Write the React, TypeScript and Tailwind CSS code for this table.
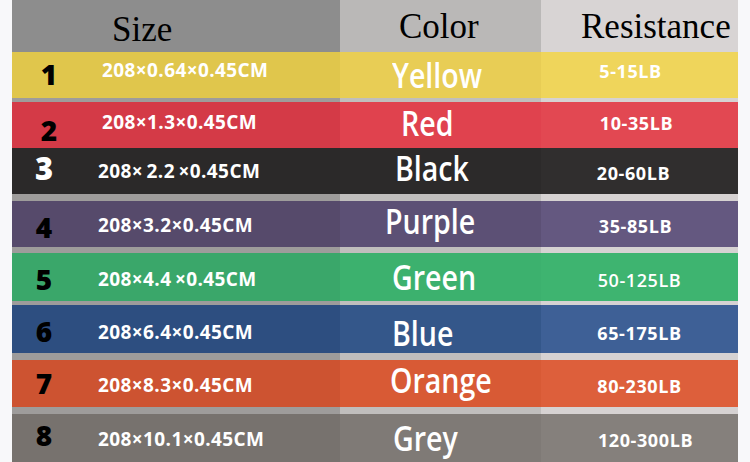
import React from "react";

type Band = {
  n: string;
  dim: string;
  color: string;
  res: string;
  h: string;
  bg: [string, string, string];
  numCls: string;
  numPad: string;
  dimCls: string;
  colorCls: string;
  resCls: string;
  gap?: string;
};

const bands: Band[] = [
  {
    n: "1",
    dim: "208×0.64×0.45CM",
    color: "Yellow",
    res: "5-15LB",
    h: "h-[46px]",
    bg: ["bg-[#e0c64c]", "bg-[#e8cd55]", "bg-[#efd55b]"],
    numCls: "text-black pb-[3px]",
    numPad: "pl-[26px]",
    dimCls: "pl-[4px] pb-[9px]",
    colorCls: "pl-[52px]",
    resCls: "pb-[8px] pr-[18px]",
    gap: "h-[4px]",
  },
  {
    n: "2",
    dim: "208×1.3×0.45CM",
    color: "Red",
    res: "10-35LB",
    h: "h-[46px]",
    bg: ["bg-[#d43a47]", "bg-[#e0424e]", "bg-[#e24852]"],
    numCls: "text-black pt-[10px]",
    numPad: "pl-[26px]",
    dimCls: "pl-[4px] pb-[5px]",
    colorCls: "pl-[61px] pb-[5px]",
    resCls: "pb-[4px] pr-[6px]",
  },
  {
    n: "3",
    dim: "208×\u20092.2\u2009×0.45CM",
    color: "Black",
    res: "20-60LB",
    h: "h-[46px]",
    bg: ["bg-[#2b2929]", "bg-[#2c2a2a]", "bg-[#302e2e]"],
    numCls: "text-white text-[31px] pb-[6px]",
    numPad: "pl-[21px]",
    dimCls: "pt-[1px]",
    colorCls: "pl-[55px] pb-[7px]",
    resCls: "pt-[3px] pr-[12px]",
    gap: "h-[7px]",
  },
  {
    n: "4",
    dim: "208×3.2×0.45CM",
    color: "Purple",
    res: "35-85LB",
    h: "h-[46px]",
    bg: ["bg-[#564a6b]", "bg-[#5c5075]", "bg-[#645880]"],
    numCls: "text-black pt-[5px]",
    numPad: "pl-[21px]",
    dimCls: "pt-[2px]",
    colorCls: "pl-[45px] pb-[6px]",
    resCls: "pt-[4px] pr-[8px]",
    gap: "h-[6px]",
  },
  {
    n: "5",
    dim: "208×4.4\u2009×0.45CM",
    color: "Green",
    res: "50-125LB",
    h: "h-[48px]",
    bg: ["bg-[#3aa76a]", "bg-[#3cb16e]", "bg-[#3eb470]"],
    numCls: "text-black pt-[3px]",
    numPad: "pl-[21px]",
    dimCls: "pt-[4px] text-[#eaf5dc]",
    colorCls: "pl-[52px]",
    resCls: "pt-[6px] font-semibold text-[#eaf5dc] tracking-[-0.2px]",
    gap: "h-[4px]",
  },
  {
    n: "6",
    dim: "208×6.4×0.45CM",
    color: "Blue",
    res: "65-175LB",
    h: "h-[48px]",
    bg: ["bg-[#2d4e80]", "bg-[#34578a]", "bg-[#3e6096]"],
    numCls: "text-black pt-[4px]",
    numPad: "pl-[21px]",
    dimCls: "pt-[6px]",
    colorCls: "pl-[52px] pt-[7px]",
    resCls: "pt-[7px]",
    gap: "h-[7px]",
  },
  {
    n: "7",
    dim: "208×8.3×0.45CM",
    color: "Orange",
    res: "80-230LB",
    h: "h-[47px]",
    bg: ["bg-[#cd5331]", "bg-[#d85a35]", "bg-[#dd5f3b]"],
    numCls: "text-black pb-[1px]",
    numPad: "pl-[21px]",
    dimCls: "pt-[4px]",
    colorCls: "pl-[50px] pb-[7px]",
    resCls: "pt-[5px]",
    gap: "h-[7px]",
  },
  {
    n: "8",
    dim: "208×10.1×0.45CM",
    color: "Grey",
    res: "120-300LB",
    h: "h-[48px]",
    bg: ["bg-[#77726e]", "bg-[#7f7a76]", "bg-[#85807c]"],
    numCls: "text-black pb-[6px]",
    numPad: "pl-[21px]",
    dimCls: "pt-[2px]",
    colorCls: "pl-[53px]",
    resCls: "pt-[4px] pl-[12px]",
  },
];

const cols = "grid grid-cols-[328px_201px_197px]";
const sans = "font-['Open_Sans',sans-serif]";
const serif = "font-['Liberation_Serif',serif]";

function BandRow({ b }: { b: Band }) {
  return (
    <>
      <div className={`${cols} ${b.h}`}>
        {/* size */}
        <div className={`${b.bg[0]} flex items-center`}>
          <div className={`w-[86px] flex items-center ${b.numPad}`}>
            <span
              className={`w-[22px] text-center text-[28px] leading-none font-extrabold ${sans} ${b.numCls}`}
            >
              {b.n}
            </span>
          </div>
          <span
            className={`text-[19px] leading-none font-bold tracking-[0.4px] text-white whitespace-pre ${sans} ${b.dimCls}`}
          >
            {b.dim}
          </span>
        </div>
        {/* color */}
        <div className={`${b.bg[1]} flex items-center ${b.colorCls}`}>
          <span
            className={`inline-block origin-left scale-x-[0.84] text-[34px] leading-none font-semibold text-white ${sans}`}
          >
            {b.color}
          </span>
        </div>
        {/* resistance */}
        <div
          className={`${b.bg[2]} flex items-center justify-center text-[18px] leading-none font-bold tracking-[0.6px] text-white ${sans} ${b.resCls}`}
        >
          {b.res}
        </div>
      </div>
      {b.gap && (
        <div className={`${cols} ${b.gap}`}>
          <div className="bg-[#9e9c9b]" />
          <div className="bg-[#c0bebd]" />
          <div className="bg-[#d6d2d2]" />
        </div>
      )}
    </>
  );
}

export default function App() {
  return (
    <div className="w-[750px] h-[462px] overflow-hidden bg-[#f8f8fa]">
      <div className="ml-[12px] w-[726px] flex flex-col">
        {/* header */}
        <div className={`${cols} h-[52px] text-[35px] leading-none text-black ${serif}`}>
          <div className="bg-[#8d8d8d] pl-[100px] pt-[12px]">Size</div>
          <div className="bg-[#bab8b7] pl-[59px] pt-[9px]">Color</div>
          <div className="bg-[#d8d4d4] pl-[40px] pt-[9px]">Resistance</div>
        </div>
        {bands.map((b) => (
          <BandRow key={b.n} b={b} />
        ))}
      </div>
    </div>
  );
}
